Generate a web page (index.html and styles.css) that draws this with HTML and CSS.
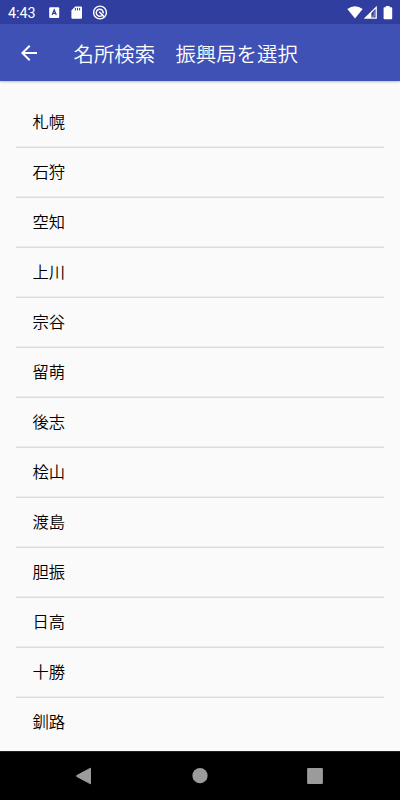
FILE: index.html
```html
<!DOCTYPE html>
<html lang="ja">
<head>
    <meta charset="UTF-8">
    <meta name="viewport" content="width=device-width, initial-scale=1.0">
    <title>名所検索</title>
    <link rel="stylesheet" href="styles.css">
</head>
<body>
    <div class="screen">
        <div class="status-bar">
            <span class="clock">4:43</span>
            <div class="notifications">
                <svg width="12" height="14" viewBox="0 0 12 14">
                    <rect x="0.2" y="1.2" width="10" height="10.8" rx="1" fill="#fff"/>
                    <path d="M3.1 8.9L5.2 3.9L7.3 8.9M3.8 7.4H6.6" fill="none" stroke="#303f9f" stroke-width="1.2"/>
                </svg>
                <svg width="12" height="14" viewBox="0 0 12 14">
                    <path d="M4.2 .6H10Q11 .6 11 1.6V11.8Q11 12.8 10 12.8H1.4Q.4 12.8 .4 11.8V4.6Z" fill="#fff"/>
                    <path d="M4.4 2V4.4M6.5 2V4.4M8.6 2V4.4" stroke="#303f9f" stroke-width="1"/>
                </svg>
                <svg width="15" height="16" viewBox="0 0 15 16">
                    <circle cx="7" cy="7.5" r="6.4" fill="none" stroke="#fff" stroke-width="1.4"/>
                    <path d="M8.8 10.6A3.5 3.5 0 1 1 10.2 8.3" fill="none" stroke="#fff" stroke-width="1.5"/>
                    <path d="M6.2 6.8L11 11.6" stroke="#fff" stroke-width="1.6"/>
                </svg>
            </div>
            <div class="system-icons">
                <svg width="46" height="14" viewBox="0 0 46 14">
                    <path d="M0.3 3.1Q8 -2.8 15.7 3.1L8 12.5Z" fill="#fff"/>
                    <path d="M29.2 1.4V12.1H18.3Z" fill="none" stroke="#fff" stroke-width="1.3"/>
                    <path d="M24.4 6V12H18.6Z" fill="#fff"/>
                    <path d="M27.2 5.4V10.2H25" fill="none" stroke="#fff" stroke-width=".5"/>
                    <path d="M38.8 0H42.6V1.2H44.4Q45.2 1.2 45.2 2V12.3Q45.2 13.2 44.4 13.2H37.4Q36.6 13.2 36.6 12.3V2Q36.6 1.2 37.4 1.2H38.8Z" fill="#fff"/>
                </svg>
            </div>
        </div>

        <header class="app-bar">
            <svg class="back" width="24" height="24" viewBox="0 0 24 24">
                <path d="M20 11H7.83l5.59-5.59L12 4l-8 8 8 8 1.41-1.41L7.83 13H20v-2z" fill="#fff"/>
            </svg>
            <h1 class="title">名所検索　振興局を選択</h1>
        </header>

        <ul class="list">
            <li>札幌</li>
            <li>石狩</li>
            <li>空知</li>
            <li>上川</li>
            <li>宗谷</li>
            <li>留萌</li>
            <li>後志</li>
            <li>桧山</li>
            <li>渡島</li>
            <li>胆振</li>
            <li>日高</li>
            <li>十勝</li>
            <li>釧路</li>
        </ul>

        <nav class="nav-bar">
            <svg width="18" height="18" viewBox="0 0 18 18">
                <path d="M15.5 1.2V16.8L1.7 9.4V8.6Z" fill="#9b9b9b" stroke="#9b9b9b" stroke-linejoin="round"/>
            </svg>
            <svg width="18" height="18" viewBox="0 0 18 18">
                <circle cx="9" cy="8.7" r="7.6" fill="#9b9b9b"/>
            </svg>
            <svg width="18" height="18" viewBox="0 0 18 18">
                <rect x="1.1" y="1" width="15.8" height="16" rx="1" fill="#9b9b9b"/>
            </svg>
        </nav>
    </div>
</body>
</html>
```
FILE: styles.css
```css
* {
    margin: 0;
    padding: 0;
    box-sizing: border-box;
}

body {
    font-family: Roboto, "Noto Sans CJK JP", sans-serif;
    background: #fafafa;
}

.screen {
    display: flex;
    flex-direction: column;
    height: 800px;
    overflow: hidden;
}

svg {
    display: block;
    flex: none;
}

.status-bar {
    height: 24px;
    flex: none;
    display: flex;
    align-items: center;
    padding: 1px 7px 0 8px;
    background: #303f9f;
    color: #ffffff;
}

.clock {
    width: 41px;
    font-size: 14.3px;
    line-height: 24px;
}

.notifications {
    display: flex;
    align-items: center;
    gap: 10px;
}

.system-icons {
    margin-left: auto;
}

.app-bar {
    height: 57px;
    flex: none;
    display: flex;
    align-items: center;
    padding: 0 16.5px;
    background: #3f51b5;
    color: #ffffff;
    box-shadow: 0 1px 2px rgba(0, 0, 0, 0.25);
}

.title {
    margin-left: 33px;
    padding-top: 4px;
    font-size: 20.4px;
    font-weight: 350;
    line-height: 30px;
    white-space: nowrap;
}

.list {
    flex: 1;
    min-height: 0;
    overflow: hidden;
    padding: 17px 16px 0;
    list-style: none;
}

.list li {
    height: 50px;
    padding: 0 16.5px;
    border-bottom: 1px solid #dcdcdc;
    box-shadow: inset 0 -1px #ececec;
    color: #000000;
    font-size: 16.3px;
    font-weight: 350;
    line-height: 49px;
}

.list li:last-child {
    border-bottom: none;
    box-shadow: none;
}

.nav-bar {
    height: 49px;
    flex: none;
    display: flex;
    justify-content: space-between;
    align-items: center;
    padding: 0 76px 0 75px;
    border-top: 1px solid #202020;
    background: #000000;
}
```
